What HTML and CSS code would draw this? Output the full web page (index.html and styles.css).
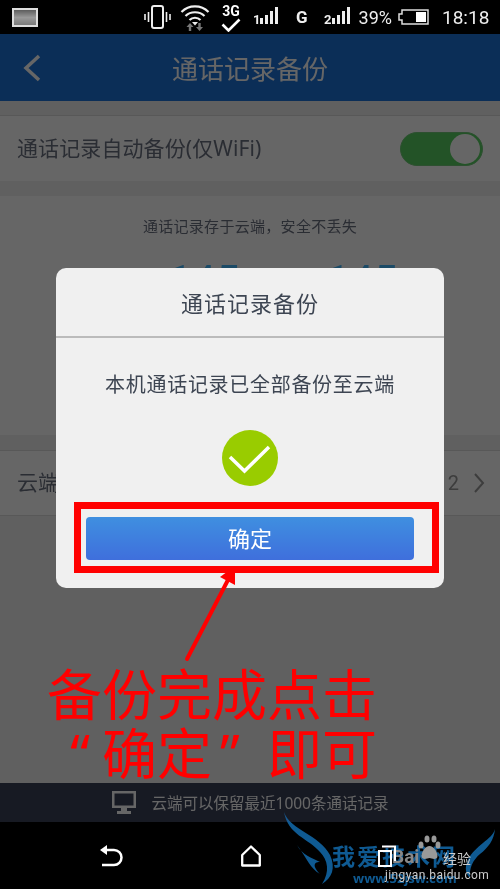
FILE: index.html
```html
<!DOCTYPE html>
<html lang="zh-CN">
<head>
    <meta charset="UTF-8">
    <meta name="viewport" content="width=device-width, initial-scale=1.0">
    <title>通话记录备份</title>
    <link rel="stylesheet" href="styles.css">
</head>
<body>
    <div class="phone">
        <div class="status-bar">
            <svg class="ic-photo" width="26" height="19" viewBox="0 0 26 19">
                <defs>
                    <linearGradient id="photoFill" x1="0" y1="0" x2="0" y2="1">
                        <stop offset="0" stop-color="#555"/>
                        <stop offset="0.5" stop-color="#999"/>
                        <stop offset="1" stop-color="#777"/>
                    </linearGradient>
                </defs>
                <rect x="1" y="1" width="24" height="17" fill="url(#photoFill)" stroke="#ddd" stroke-width="2"/>
            </svg>
            <svg class="ic-vibrate" width="27" height="24" viewBox="0 0 27 24" fill="none" stroke="#eee">
                <rect x="8" y="1" width="11" height="22" rx="2" stroke-width="2"/>
                <path d="M4.5 7v10M1 9v6M22.500 7v10M26 9v6" stroke-width="1.600"/>
            </svg>
            <svg class="ic-wifi" width="30" height="28" viewBox="0 0 30 28" fill="none">
                <path d="M1.500 8C9 0.500 21 0.500 28.500 8M5.500 12C10.500 7 19.500 7 24.500 12M9.500 16C12.500 13 17.500 13 20.500 16" stroke="#eee" stroke-width="2.200"/>
                <path d="M15 21.500l-3-3.500h6z" fill="#eee"/>
                <path d="M10 19l-3.500 4h2.300v4h2.400v-4h2.300zM19.500 27l3.500-4h-2.300v-4h-2.400v4h-2.300z" fill="#777"/>
            </svg>
            <div class="ic-3g">
                <span class="net-label">3G</span>
                <svg width="20" height="14" viewBox="0 0 20 14" fill="none">
                    <path d="M1.500 6.500l6 6 11-11" stroke="#fff" stroke-width="2.600"/>
                </svg>
            </div>
            <svg class="ic-signal" width="26" height="24" viewBox="0 0 26 24" fill="#eee">
                <text x="0" y="17" class="sim-num">1</text>
                <rect x="7" y="11" width="3" height="6"/>
                <rect x="12" y="8" width="3" height="9"/>
                <rect x="17" y="4" width="3" height="13"/>
                <rect x="22" y="0" width="3" height="17"/>
            </svg>
            <span class="net-g">G</span>
            <svg class="ic-signal-2" width="27" height="24" viewBox="0 0 27 24" fill="#eee">
                <text x="0" y="17" class="sim-num">2</text>
                <rect x="8" y="11" width="3" height="6"/>
                <rect x="13" y="8" width="3" height="9"/>
                <rect x="18" y="4" width="3" height="13"/>
                <rect x="23" y="0" width="3" height="17"/>
            </svg>
            <span class="battery-pct">39%</span>
            <svg class="ic-battery" width="31" height="16" viewBox="0 0 31 16" fill="none">
                <path d="M4 1h26v14H4v-4H1V5h3z" stroke="#ddd" stroke-width="1.500"/>
                <rect x="18" y="3" width="10" height="10" fill="#fff"/>
            </svg>
            <span class="clock">18:18</span>
        </div>

        <div class="app">
            <header class="app-bar">
                <svg class="back" width="18" height="28" viewBox="0 0 18 28" fill="none">
                    <path d="M16 2L3 14l13 12" stroke="#fff" stroke-width="3.500"/>
                </svg>
                <h1 class="app-title">通话记录备份</h1>
            </header>

            <main class="content">
                <div class="row row-auto">
                    <span class="row-label">通话记录自动备份(仅WiFi)</span>
                    <div class="switch"><div class="switch-knob"></div></div>
                </div>

                <section class="summary">
                    <p class="summary-note">通话记录存于云端，安全不丢失</p>
                    <div class="counts">
                        <span class="count">145</span>
                        <span class="count">145</span>
                    </div>
                </section>

                <div class="row row-cloud">
                    <span class="row-label">云端</span>
                    <div class="row-end">
                        <span class="row-num">2</span>
                        <svg width="12" height="20" viewBox="0 0 12 20" fill="none">
                            <path d="M2 1l8 9-8 9" stroke="#999" stroke-width="2"/>
                        </svg>
                    </div>
                </div>
            </main>

            <footer class="tip-bar">
                <svg width="24" height="23" viewBox="0 0 24 23" fill="#fff">
                    <path d="M0 0h24v17H15v3h4v3H5v-3h4v-3H0zM2.500 2.500v12h19v-12z" fill-rule="evenodd"/>
                </svg>
                <span>云端可以保留最近1000条通话记录</span>
            </footer>

            <div class="dim">
                <div class="dialog">
                    <h2 class="dialog-title">通话记录备份</h2>
                    <div class="dialog-body">
                        <p class="dialog-msg">本机通话记录已全部备份至云端</p>
                        <svg class="dialog-check" width="56" height="56" viewBox="0 0 56 56" fill="none">
                            <circle cx="28" cy="28" r="28" fill="#99cc00"/>
                            <path d="M8 27l14.500 14L47 17" stroke="#fff" stroke-width="3.500"/>
                        </svg>
                        <button class="ok-btn">确定</button>
                    </div>
                </div>
            </div>
        </div>

        <nav class="nav-bar">
            <svg width="23" height="22" viewBox="0 0 23 22" fill="none">
                <path d="M4 5h10a7.500 7.500 0 0 1 0 15H2" stroke="#fff" stroke-width="2.500"/>
                <path d="M0 5l7-5v10z" fill="#fff"/>
            </svg>
            <svg width="20" height="22" viewBox="0 0 20 22" fill="none">
                <path d="M10 1.500l8.800 8.500v10.500H1.200V10z" stroke="#fff" stroke-width="2.300" stroke-linejoin="round"/>
            </svg>
            <svg width="18" height="22" viewBox="0 0 18 22" fill="none" stroke="#fff" stroke-width="2">
                <rect x="1" y="6" width="12" height="15"/>
                <path d="M4 1.500h13v15"/>
            </svg>
        </nav>

        <!-- red notes drawn on top of the screenshot -->
        <div class="mark-box"></div>
        <svg class="mark-arrow" width="60" height="100" viewBox="0 0 60 100" fill="none">
            <path d="M4 95L46 14" stroke="#f00" stroke-width="4" stroke-linecap="round"/>
            <path d="M52 2L52 21 37 13z" fill="#f00"/>
        </svg>
        <div class="mark-text">
            <div>备份完成点击</div>
            <div><span class="quote-open">“</span>确定<span class="quote-close">”</span>即可</div>
        </div>

        <!-- watermark -->
        <div class="watermark">
            <svg width="230" height="79" viewBox="0 0 230 79" fill="#0f5a92">
                <path d="M14 2C20 20 50 25 60 45C66 58 62 68 52 74C60 62 58 50 50 42C38 28 18 25 14 2Z"/>
                <path d="M27 35C32 45 42 48 50 52C42 52 44 58 50 64C40 58 38 50 27 35Z"/>
                <path d="M225 19C222 30 205 35 198 50C194 58 196 64 200 68C199 58 203 50 210 44C218 38 224 30 225 19Z"/>
            </svg>
            <span class="wm-name">我爱技术网</span>
            <span class="wm-url">www.52jsw.com</span>
            <span class="wm-bai">Bai</span>
            <svg class="wm-paw" width="24" height="26" viewBox="0 0 24 26" fill="#999">
                <ellipse cx="4" cy="10" rx="2.500" ry="3.500"/>
                <ellipse cx="10" cy="4" rx="2.500" ry="3.500"/>
                <ellipse cx="17" cy="4" rx="2.500" ry="3.500"/>
                <ellipse cx="21" cy="10" rx="2.500" ry="3.500"/>
                <path d="M12.500 11c-4 0-8 6-8 10 0 4 5 3 8 2 3 1 8 2 8-2 0-4-4-10-8-10z"/>
            </svg>
            <span class="wm-jy">经验</span>
            <span class="wm-site">jingyan.baidu.com</span>
        </div>
    </div>
</body>
</html>
```

FILE: styles.css
```css
* {
    margin: 0;
    padding: 0;
    box-sizing: border-box;
    font-family: "Noto Sans", "Noto Sans CJK SC", sans-serif;
}

body {
    background-color: #000;
}

.phone {
    position: relative;
    width: 500px;
    height: 889px;
    display: flex;
    flex-direction: column;
    overflow: hidden;
    background: #000;
}

/* status bar */
.status-bar {
    height: 34px;
    display: flex;
    align-items: center;
    padding-left: 12px;
    color: #eee;
}

.ic-photo { margin-top: 1px; }
.ic-vibrate { margin-left: 106px; }
.ic-wifi { margin-left: 9px; margin-top: 2px; }

.ic-3g {
    margin-left: 11px;
    margin-top: 2px;
    width: 20px;
    display: flex;
    flex-direction: column;
    align-items: center;
}

.net-label {
    font-family: Roboto, sans-serif;
    font-size: 14px;
    font-weight: 700;
    line-height: 14px;
    color: #fff;
}

.ic-signal { margin-left: 12px; margin-top: 4px; }

.sim-num {
    font-family: Roboto, sans-serif;
    font-size: 13px;
    font-weight: 700;
}

.net-g {
    margin-left: 17px;
    font-family: Roboto, sans-serif;
    font-size: 17px;
    font-weight: 700;
    line-height: 18px;
    color: #eee;
}

.ic-signal-2 { margin-left: 16px; margin-top: 4px; }

.battery-pct {
    margin-left: 8px;
    font-family: Roboto, sans-serif;
    font-size: 18px;
}

.ic-battery { margin-left: 6px; }

.clock {
    margin-left: 13px;
    font-family: Roboto, sans-serif;
    font-size: 19px;
}

/* app */
.app {
    position: relative;
    flex: 1;
    display: flex;
    flex-direction: column;
    background: #f0f0f0;
}

.app-bar {
    height: 67px;
    display: flex;
    align-items: center;
    justify-content: center;
    position: relative;
    background: #1c73da;
}

.back {
    position: absolute;
    left: 23px;
    top: 20px;
}

.app-title {
    font-size: 26px;
    font-weight: 400;
    color: #fff;
}

.content {
    flex: 1;
    padding-top: 14px;
}

.row {
    height: 66px;
    display: flex;
    align-items: center;
    justify-content: space-between;
    padding: 0 17px;
    background: #fff;
    border-top: 1px solid #ddd;
}

.row-label {
    font-size: 21px;
    letter-spacing: 0.1px;
    color: #6a7080;
    margin-bottom: 4px;
}

.switch {
    width: 83px;
    height: 34px;
    border-radius: 17px;
    background: #58d062;
    border: 1px solid #70c878;
    display: flex;
    align-items: center;
    justify-content: flex-end;
    padding-right: 2px;
}

.switch-knob {
    width: 30px;
    height: 30px;
    border-radius: 50%;
    background: #fff;
}

.summary {
    margin-top: 15px;
    height: 239px;
    background: #fff;
    padding-top: 20px;
    overflow: hidden;
}

.summary-note {
    font-size: 15px;
    line-height: 20px;
    letter-spacing: 0.3px;
    text-align: center;
    color: #6a7080;
}

.counts {
    margin-top: 24px;
    padding-left: 66px;
    display: flex;
    justify-content: center;
    gap: 87px;
}

.count {
    font-family: Roboto, sans-serif;
    font-size: 42px;
    line-height: 42px;
    color: #45b8ff;
}

.row-cloud {
    margin-top: 15px;
    border-bottom: 1px solid #ddd;
}

.row-end {
    display: flex;
    align-items: center;
    gap: 14px;
    margin-right: -2px;
    font-size: 20px;
    color: #999;
}

.row-num {
    font-family: Roboto, sans-serif;
}

.tip-bar {
    height: 39px;
    display: flex;
    align-items: center;
    justify-content: center;
    gap: 16px;
    background: #3a4158;
    color: #fff;
    font-size: 15.5px;
}

/* dialog */
.dim {
    position: absolute;
    top: 0;
    left: 0;
    right: 0;
    bottom: 0;
    display: flex;
    align-items: center;
    justify-content: center;
    background: rgba(0,0,0,0.6);
}

.dialog {
    width: 388px;
    height: 320px;
    border-radius: 10px;
    background: #f0f0f0;
}

.dialog-title {
    height: 70px;
    display: flex;
    align-items: center;
    justify-content: center;
    font-size: 22px;
    font-weight: 400;
    letter-spacing: 1px;
    color: #3d4552;
    border-bottom: 2px solid #bbb;
}

.dialog-body {
    display: flex;
    flex-direction: column;
    align-items: center;
    padding: 32px 30px 0;
}

.dialog-msg {
    font-size: 20px;
    line-height: 30px;
    letter-spacing: 0.7px;
    color: #3d4552;
}

.dialog-check {
    margin-top: 30px;
}

.ok-btn {
    width: 328px;
    height: 43px;
    margin-top: 31px;
    padding-bottom: 4px;
    border: none;
    border-radius: 4px;
    background: linear-gradient(#3f8fe0, #3f6fdc);
    color: white;
    font-size: 22px;
}

/* bottom keys */
.nav-bar {
    height: 67px;
    display: flex;
    align-items: center;
    justify-content: space-between;
    padding: 0 104px 0 100px;
    background: #000;
}

/* red notes */
.mark-box {
    position: absolute;
    left: 74px;
    top: 502px;
    width: 365px;
    height: 71px;
    border: 7px solid #f00;
}

.mark-arrow {
    position: absolute;
    left: 183px;
    top: 564px;
}

.mark-text {
    position: absolute;
    left: 47px;
    top: 664px;
    width: 330px;
    font-family: "Noto Serif CJK SC", "Noto Sans CJK SC", serif;
    font-size: 55px;
    line-height: 59px;
    color: #f00;
    white-space: nowrap;
}

.quote-open,
.quote-close {
    display: inline-block;
    width: 55px;
}

.quote-open {
    text-align: right;
    padding-right: 12px;
}

.quote-close {
    text-align: left;
    padding-left: 8px;
}

/* watermark */
.watermark {
    position: absolute;
    left: 270px;
    top: 810px;
    width: 230px;
    height: 79px;
    mix-blend-mode: lighten;
}

.wm-name {
    position: absolute;
    left: 62px;
    top: 31px;
    font-size: 23px;
    line-height: 30px;
    font-weight: 700;
    letter-spacing: 2px;
    color: #0f5a92;
}

.wm-url {
    position: absolute;
    left: 83px;
    top: 60px;
    font-size: 13px;
    line-height: 16px;
    font-weight: 700;
    color: #0f5a92;
}

.wm-bai {
    position: absolute;
    left: 122px;
    top: 36px;
    font-family: Roboto, sans-serif;
    font-size: 19px;
    line-height: 22px;
    font-weight: 700;
    color: #888;
}

.wm-paw {
    position: absolute;
    left: 147px;
    top: 25px;
}

.wm-jy {
    position: absolute;
    left: 173px;
    top: 40px;
    font-size: 14px;
    line-height: 18px;
    color: #ccc;
}

.wm-site {
    position: absolute;
    left: 115px;
    top: 58px;
    font-family: Roboto, sans-serif;
    font-size: 12px;
    line-height: 14px;
    letter-spacing: 0.4px;
    color: #ccc;
}
```
